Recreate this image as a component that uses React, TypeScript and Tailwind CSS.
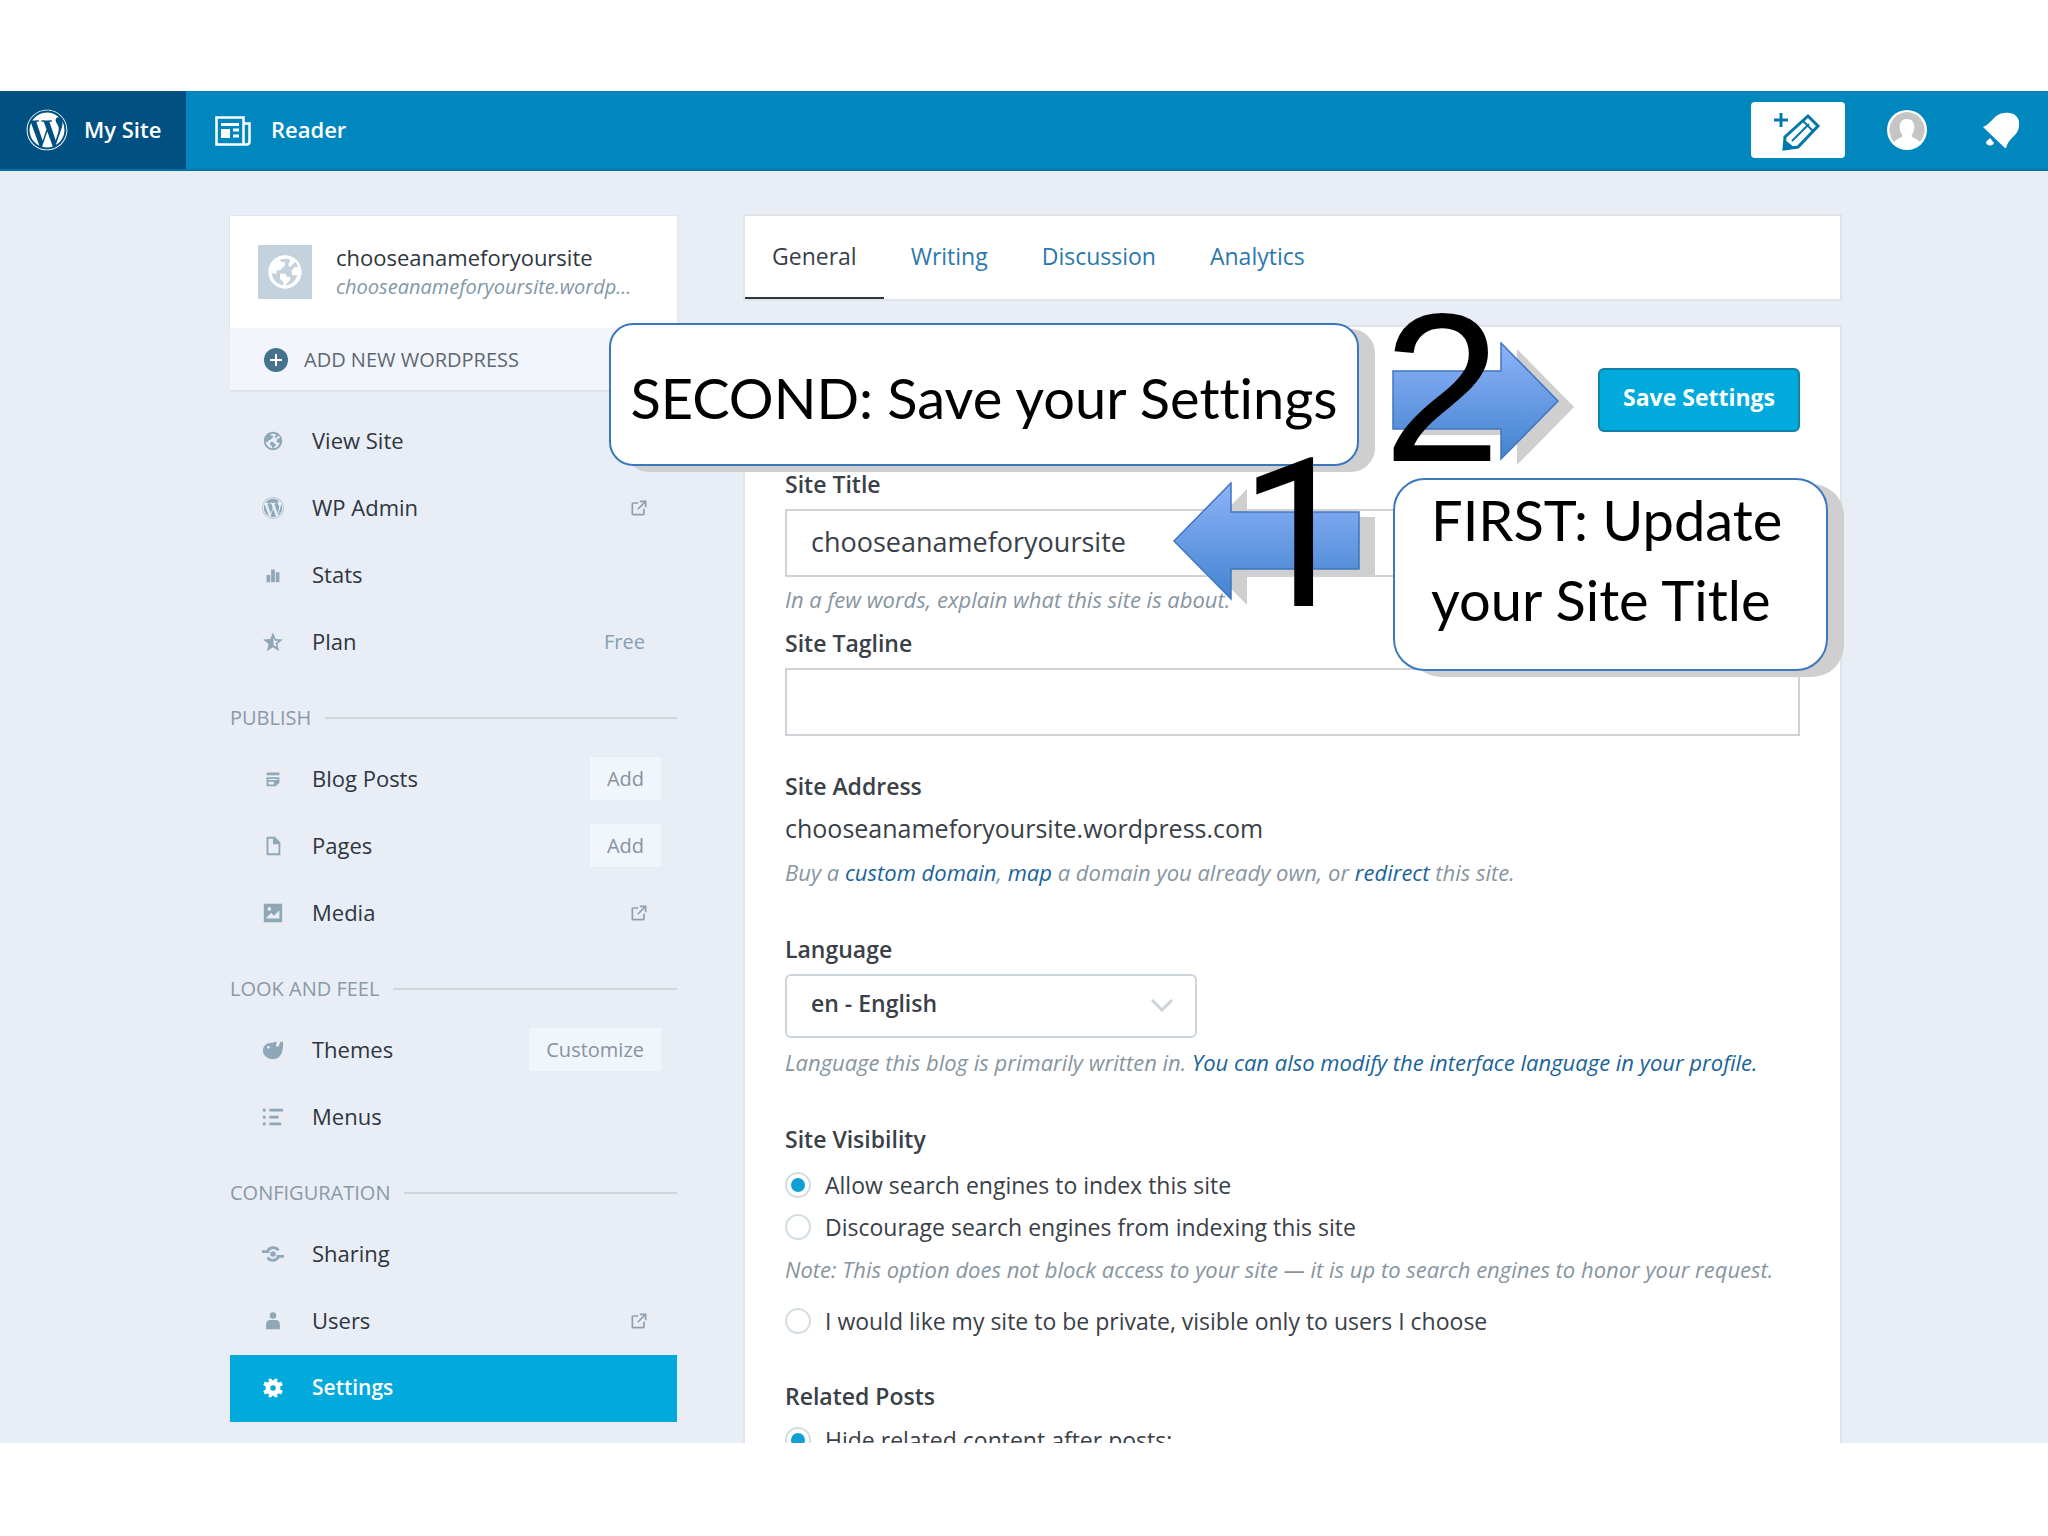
import React, { useState } from 'react';
import { FaWordpress } from 'react-icons/fa';

type IconName =
  | 'globe' | 'wordpress' | 'stats' | 'star' | 'posts' | 'page' | 'media'
  | 'themes' | 'menus' | 'sharing' | 'user' | 'cog' | 'external';

type MenuItem = {
  label: string;
  icon: IconName;
  external?: boolean;
  note?: string;
  action?: string;
};

const siteMenu: MenuItem[] = [
  { label: 'View Site', icon: 'globe' },
  { label: 'WP Admin', icon: 'wordpress', external: true },
  { label: 'Stats', icon: 'stats' },
  { label: 'Plan', icon: 'star', note: 'Free' },
];

const sections: { title: string; items: MenuItem[] }[] = [
  {
    title: 'Publish',
    items: [
      { label: 'Blog Posts', icon: 'posts', action: 'Add' },
      { label: 'Pages', icon: 'page', action: 'Add' },
      { label: 'Media', icon: 'media', external: true },
    ],
  },
  {
    title: 'Look and Feel',
    items: [
      { label: 'Themes', icon: 'themes', action: 'Customize' },
      { label: 'Menus', icon: 'menus' },
    ],
  },
  {
    title: 'Configuration',
    items: [
      { label: 'Sharing', icon: 'sharing' },
      { label: 'Users', icon: 'user', external: true },
      { label: 'Settings', icon: 'cog' },
    ],
  },
];

const tabs = ['General', 'Writing', 'Discussion', 'Analytics'];

const iconShapes: Record<Exclude<IconName, 'wordpress'>, React.ReactNode> = {
  globe: (
    <path d="M12 2C6.477 2 2 6.477 2 12s4.477 10 10 10 10-4.477 10-10S17.523 2 12 2zm0 18l2-2 1-1v-2h-2v-1l-1-1H9v3l2 2v1.93c-3.94-.494-7-3.858-7-7.93l1 1h2v-2h2l3-3V6h-2L9 5v-.41C9.927 4.21 10.94 4 12 4s2.073.212 3 .59V6l-1 1v1l1 1 3.13-3.13c.752.897 1.304 1.964 1.606 3.13H18l-2 2v2l1 1h2l.286.286C18.03 18.06 15.24 20 12 20z" />
  ),
  stats: <path d="M5 12h4v8H5zM10 6h4v14h-4zM15 9h4v11h-4z" />,
  star: (
    <path
      fillRule="evenodd"
      d="M12 1.5l3 7.2 7.8.6-6 5 1.9 7.7-6.700-4.200-6.700 4.200 1.900-7.700-6-5 7.800-.6zM12.500 7v8.200l3.300 2.200-1-4 2.900-2.400-3.800-.3z"
    />
  ),
  posts: <path fillRule="evenodd" d="M5 5h14v3H5zM5 10h14v6l-4 4H5zM7 12v1h10v-1zM7 15v3h6v-3z" />,
  page: <path fillRule="evenodd" d="M5 2h9l6 6v14H5zM7 4v16h11V10h-6V4z" />,
  media: <path fillRule="evenodd" d="M2 2h20v20H2zM5 18h14V9l-6 6-3-3-5 5zM8 5.500a2 2 0 100 4 2 2 0 000-4z" />,
  themes: (
    <path
      fillRule="evenodd"
      d="M12 4c1-1 2.500-1.300 4-.6L15 8l3 .5L20 3h3c.5 10-2 19-11 19C6 22 1 18 1 12.500 1 7.500 5 3.500 12 4zM7 7.500a1.500 1.500 0 100 3 1.500 1.500 0 000-3z"
    />
  ),
  menus: <path d="M1 3h3v3H1zM8 3h15v3H8zM1 10.500h3v3H1zM8 10.500h10v3H8zM1 18h3v3H1zM8 18h13v3H8z" />,
  sharing: (
    <>
      <path d="M6 9c1.500-3 3.500-4 6-4s4.500 1 6 3M18 15c-1.500 3-3.500 4-6 4s-4.500-1-6-3" fill="none" stroke="currentColor" strokeWidth="3" />
      <path d="M0 8h8v3H0zM16 13h8v3h-8z" />
      <circle cx="12" cy="12" r="3" />
    </>
  ),
  user: <path d="M12 2.500a3.500 3.500 0 110 7 3.500 3.500 0 010-7zM9 11h6c3 0 4.500 2 4.500 4.500V21h-15v-5.500C4.500 13 6 11 9 11z" />,
  cog: (
    <path
      fillRule="evenodd"
      d="M20 12c0-.568-.06-1.122-.174-1.656l2.834-1.412-1.600-3.664-3.722.786-.86-.857L17 2h-3l-2 2.200L10 2H7l.52 3.196-.858.857L3 5.268l-1.660 3.464 2.834 1.612C4.060 10.878 4 11.432 4 12s.06 1.122.174 1.656L1.340 15.268l1.660 3.464 3.662-.786.858.857L7 22h3l2-2.200L14 22h3l-.52-3.196.858-.857 3.722.786 1.600-3.464-2.834-1.613C19.940 13.120 20 12.566 20 12zm-8 3a3 3 0 110-6 3 3 0 010 6z"
    />
  ),
  external: (
    <path d="M19 13v6c0 1.100-.9 2-2 2H5c-1.100 0-2-.9-2-2V7c0-1.100.9-2 2-2h6v2H5v12h12v-6h2zM13 3v2h4.586l-7.793 7.793 1.414 1.414L19 6.414V11h2V3h-8z" />
  ),
};

function Icon({ name, className }: { name: IconName; className?: string }) {
  if (name === 'wordpress') {
    return <FaWordpress className={className} aria-hidden="true" />;
  }
  return (
    <svg viewBox="0 0 24 24" fill="currentColor" className={className} aria-hidden="true">
      {iconShapes[name]}
    </svg>
  );
}

function Masthead() {
  return (
    <header className="flex h-20 shrink-0 items-stretch border-b-2 border-[#0074a6] bg-[#0087be] text-[22px] font-semibold text-white">
      <a href="#my-site" className="flex w-[186px] items-center gap-4 bg-[#005082] pl-[26px]">
        <FaWordpress className="size-[42px]" aria-hidden="true" />
        <span className="pb-0.5 whitespace-nowrap">My Site</span>
      </a>
      <a href="#reader" className="flex items-center gap-5 pl-[29px]">
        <svg viewBox="0 0 36 30" className="mt-0.5 h-[30px] w-9" fill="none" stroke="currentColor" strokeWidth="2.500" aria-hidden="true">
          <path d="M1.500 1.500h27v27h-27zM28.500 7.500h6v18c0 2-1 3-3 3h-4" />
          <path d="M6 8.500h18" strokeWidth="3" />
          <path d="M6 13h9v9H6z" fill="currentColor" stroke="none" />
          <path d="M18 14h6M18 20h6" strokeWidth="3" />
        </svg>
        <span className="pb-0.5">Reader</span>
      </a>
      <div className="ml-auto flex items-center pr-[29px]">
        <button type="button" aria-label="New post" className="flex h-14 w-[94px] items-center justify-center rounded-sm bg-white text-[#0078ab]">
          <svg viewBox="0 0 48 42" className="h-[42px] w-12" fill="none" stroke="currentColor" strokeWidth="2.500" aria-hidden="true">
            <path d="M7 4v14M0 11h14" strokeWidth="3" />
            <path d="M34 7l10 10-20 21-14 2 1-12z" strokeWidth="3" />
            <path d="M29 12l10 10M18 32L35 15" strokeWidth="2" />
            <path d="M10 30l11 9-11 2z" fill="currentColor" stroke="none" />
          </svg>
        </button>
        <a href="#me" aria-label="My profile" className="ml-[42px]">
          <svg viewBox="0 0 40 40" className="size-10" aria-hidden="true">
            <circle cx="20" cy="20" r="20" fill="#fff" />
            <path d="M20 2a18 18 0 00-13 30c3-3 6-4 8-5 1-1 0-3-1-4-3-7-1-14 6-14s9 7 6 14c-1 1-2 3-1 4 2 1 5 2 8 5A18 18 0 0020 2z" fill="#c5c5c5" />
          </svg>
        </a>
        <a href="#notifications" aria-label="Notifications" className="ml-14">
          <svg viewBox="0 0 36 36" className="size-9" fill="currentColor" aria-hidden="true">
            <path d="M0 15C5 13 8 9 12 5c4-4 10-5 15-4 6 1 10 6 9 12 0 5-2 8-6 12-3 3-6 6-7 12z" />
            <path d="M3 30l4-4 4 5c-2 4-8 3-8-1z" />
          </svg>
        </a>
      </div>
    </header>
  );
}

function MenuRow({ item, current }: { item: MenuItem; current?: boolean }) {
  return (
    <li
      className={`flex h-[67px] items-center pr-4 pb-0.5 pl-8 ${
        current ? 'bg-[#00aadc] text-[21px] font-semibold text-white' : 'text-[22px] text-[#2e3640]'
      }`}
    >
      <a href={`#${item.label}`} className="flex flex-1 items-center gap-7">
        <Icon name={item.icon} className={`size-[22px] ${current ? 'text-white' : 'text-[#8fa8b8]'}`} />
        <span>{item.label}</span>
      </a>
      {item.external && <Icon name="external" className="mr-3 size-5 text-[#8d9fae]" />}
      {item.note && <span className="mr-4 text-[20px] text-[#87a0b2]">{item.note}</span>}
      {item.action && (
        <button type="button" className="h-[43px] bg-[#f1f5fc] px-[17px] text-[20px] text-[#87939f]">
          {item.action}
        </button>
      )}
    </li>
  );
}

function Sidebar() {
  return (
    <nav className="w-[447px] shrink-0" aria-label="Site menu">
      <div className="flex h-28 items-center gap-6 bg-white px-7 shadow-[0_0_0_1px_#e0e6ec]">
        <div className="flex size-[54px] shrink-0 items-center justify-center bg-[#c4d2dd] text-white">
          <Icon name="globe" className="size-10" />
        </div>
        <div className="leading-[30px] whitespace-nowrap">
          <div className="text-[22px] text-[#2e3640]">chooseanameforyoursite</div>
          <div className="text-[20px] text-[#8297a8] italic">chooseanameforyoursite.wordp...</div>
        </div>
      </div>
      <button type="button" className="flex h-16 w-full items-center gap-4 border-b-2 border-[#dfe4ea] bg-[#f2f5fb] pt-0.5 pl-[34px] text-[20px] text-[#5d6872] uppercase">
        <svg viewBox="0 0 24 24" className="size-6" aria-hidden="true">
          <circle cx="12" cy="12" r="12" fill="#46728c" />
          <path d="M12 6v12M6 12h12" stroke="#fff" strokeWidth="2" />
        </svg>
        Add New WordPress
      </button>
      <ul className="mt-4">
        {siteMenu.map((item) => (
          <MenuRow key={item.label} item={item} />
        ))}
      </ul>
      {sections.map((section) => (
        <section key={section.title}>
          <h2 className="flex h-[70px] items-center gap-3.5 pt-3.5 text-[20px] text-[#8a9aa7] uppercase">
            {section.title}
            <span className="h-0.5 flex-1 bg-[#d0d7db]" />
          </h2>
          <ul>
            {section.items.map((item) => (
              <MenuRow key={item.label} item={item} current={item.label === 'Settings'} />
            ))}
          </ul>
        </section>
      ))}
    </nav>
  );
}

type RadioProps = {
  name: string;
  label: string;
  checked: boolean;
  onSelect: () => void;
  className?: string;
};

function Radio({ name, label, checked, onSelect, className }: RadioProps) {
  return (
    <label className={`flex h-8 items-center gap-[14px] text-[23px] text-[#3a4047] ${className || ''}`}>
      <input
        type="radio"
        name={name}
        checked={checked}
        onChange={onSelect}
        className="grid size-[26px] shrink-0 appearance-none place-content-center rounded-full border-2 border-[#d3dde4] bg-white checked:before:size-[14px] checked:before:rounded-full checked:before:bg-[#0f9fd4] checked:before:content-['']"
      />
      {label}
    </label>
  );
}

function SettingsForm() {
  const [title, setTitle] = useState('chooseanameforyoursite');
  const [tagline, setTagline] = useState('');
  const [visibility, setVisibility] = useState('public');
  const [related, setRelated] = useState('hide');

  const label = 'block h-8 text-[23px] leading-8 font-semibold text-[#3a4047]';
  const hint = 'h-8 text-[22px] leading-8 whitespace-nowrap text-[#8795a1] italic';
  const field = 'mt-[9px] block h-[68px] w-full border-2 border-[#cfd3d7] bg-white px-6 pb-1 text-[27px] text-[#3a4047] outline-none';
  const link = 'text-[#1a6399]';

  return (
    <form className="mt-7 bg-white px-10 pt-[41px] pb-24 shadow-[0_0_0_2px_#e0e4e8]" onSubmit={(e) => e.preventDefault()}>
      <div className="flex justify-end">
        <button type="submit" className="h-16 w-[202px] rounded-md border-2 border-[#1580a8] bg-[#00aadc] pb-1.5 text-[23px] font-bold text-white">
          Save Settings
        </button>
      </div>

      <label htmlFor="site-title" className={`${label} mt-9`}>Site Title</label>
      <input id="site-title" className={field} value={title} onChange={(e) => setTitle(e.target.value)} />
      <p className={`${hint} mt-1.5`}>In a few words, explain what this site is about.</p>

      <label htmlFor="site-tagline" className={`${label} mt-3`}>Site Tagline</label>
      <input id="site-tagline" className={field} value={tagline} onChange={(e) => setTagline(e.target.value)} />

      <h3 className={`${label} mt-[34px]`}>Site Address</h3>
      <p className="mt-2.5 h-8 text-[25px] leading-8 text-[#3a4047]">chooseanameforyoursite.wordpress.com</p>
      <p className={`${hint} mt-3`}>
        Buy a <a href="#domain" className={link}>custom domain</a>, <a href="#map" className={link}>map</a> a domain you
        already own, or <a href="#redirect" className={link}>redirect</a> this site.
      </p>

      <label htmlFor="language" className={`${label} mt-[45px]`}>Language</label>
      <div className="relative mt-[9px] w-[412px]">
        <select
          id="language"
          className="block h-16 w-full appearance-none rounded-md border-2 border-[#ccd4dc] bg-white px-6 pb-1.5 text-[23px] font-semibold text-[#3a4047] outline-none"
        >
          <option>en - English</option>
        </select>
        <svg viewBox="0 0 22 14" className="pointer-events-none absolute top-6 right-6 h-4 w-[22px]" fill="none" stroke="#cdd2d7" strokeWidth="3" aria-hidden="true">
          <path d="M1 1l10 10L21 1" />
        </svg>
      </div>
      <p className={`${hint} mt-2`}>
        Language this blog is primarily written in.{' '}
        <a href="#profile" className={link}>You can also modify the interface language in your profile.</a>
      </p>

      <h3 className={`${label} mt-[45px]`}>Site Visibility</h3>
      <Radio name="visibility" label="Allow search engines to index this site" checked={visibility === 'public'} onSelect={() => setVisibility('public')} className="mt-3.5" />
      <Radio name="visibility" label="Discourage search engines from indexing this site" checked={visibility === 'hidden'} onSelect={() => setVisibility('hidden')} className="mt-2.5" />
      <p className={`${hint} mt-2.5`}>
        Note: This option does not block access to your site — it is up to search engines to honor your request.
      </p>
      <Radio name="visibility" label="I would like my site to be private, visible only to users I choose" checked={visibility === 'private'} onSelect={() => setVisibility('private')} className="mt-5" />

      <h3 className={`${label} mt-[43px]`}>Related Posts</h3>
      <Radio name="related" label="Hide related content after posts:" checked={related === 'hide'} onSelect={() => setRelated('hide')} className="mt-3" />
    </form>
  );
}

// Numbered callouts and arrows laid over the settings screen
function Annotations() {
  const box = 'absolute border-2 border-[#3b78bd] bg-white shadow-[16px_6px_0_#cfcfcf]';
  const text = "font-['Lato',sans-serif] text-[56px] leading-[80px] text-black [font-variant-ligatures:none]";

  return (
    <div className="pointer-events-none absolute inset-0">
      <div className={`${box} top-[323px] left-[609px] flex h-[143px] w-[750px] items-center justify-center rounded-3xl pt-1.5`}>
        <p className={`${text} whitespace-nowrap`}>SECOND: Save your Settings</p>
      </div>
      <div className={`${box} top-[478px] left-[1393px] h-[193px] w-[435px] rounded-[32px] pl-9`}>
        <p className={text}>
          FIRST: Update
          <br />
          your Site Title
        </p>
      </div>

      <svg viewBox="0 0 184 124" className="absolute top-[342px] left-[1392px] h-[124px] w-[184px]" aria-hidden="true">
        <defs>
          <linearGradient id="arrow-fill" x1="0" y1="0" x2="0" y2="1">
            <stop offset="0" stopColor="#8db3fa" />
            <stop offset="1" stopColor="#4383cf" />
          </linearGradient>
        </defs>
        <path d="M17 35h108V7l57 58-57 58V93H17z" fill="#cfcfcf" />
        <path d="M1 29h108V1l57 58-57 58V87H1z" fill="url(#arrow-fill)" stroke="#3f76bd" strokeWidth="1.500" />
      </svg>
      <svg viewBox="0 0 204 124" className="absolute top-[482px] left-[1173px] h-[124px] w-[204px]" aria-hidden="true">
        <path d="M17 65L74 7v28h128v58H74v30z" fill="#cfcfcf" />
        <path d="M1 59L58 1v29h128v57H58v30z" fill="url(#arrow-fill)" stroke="#3f76bd" strokeWidth="1.500" />
      </svg>

      <span className="absolute top-[282px] left-[1383px] font-['Liberation_Sans',sans-serif] text-[212px] leading-none text-black">2</span>
      <span className="absolute top-[431px] left-[1239px] font-['Roboto',sans-serif] text-[208px] leading-none text-black">1</span>
    </div>
  );
}

export default function App() {
  return (
    <div className="relative flex h-screen flex-col overflow-hidden bg-white pt-[91px] pb-[93px] font-['Open_Sans',sans-serif]">
      <Masthead />
      <main className="flex min-h-0 flex-1 items-start gap-[68px] overflow-hidden bg-[#e9edf5] pt-[45px] pr-[208px] pl-[230px]">
        <Sidebar />
        <div className="min-w-0 flex-1">
          <div className="flex h-[83px] bg-white text-[23px] shadow-[0_0_0_2px_#e0e4e8]">
            {tabs.map((tab, i) => (
              <a
                key={tab}
                href={`#${tab}`}
                className={`flex items-center border-b-2 px-[27px] ${i === 0 ? 'border-[#2e3640] text-[#3a4047]' : 'border-transparent text-[#2b78ad]'}`}
              >
                {tab}
              </a>
            ))}
          </div>
          <SettingsForm />
        </div>
      </main>
      <Annotations />
    </div>
  );
}
